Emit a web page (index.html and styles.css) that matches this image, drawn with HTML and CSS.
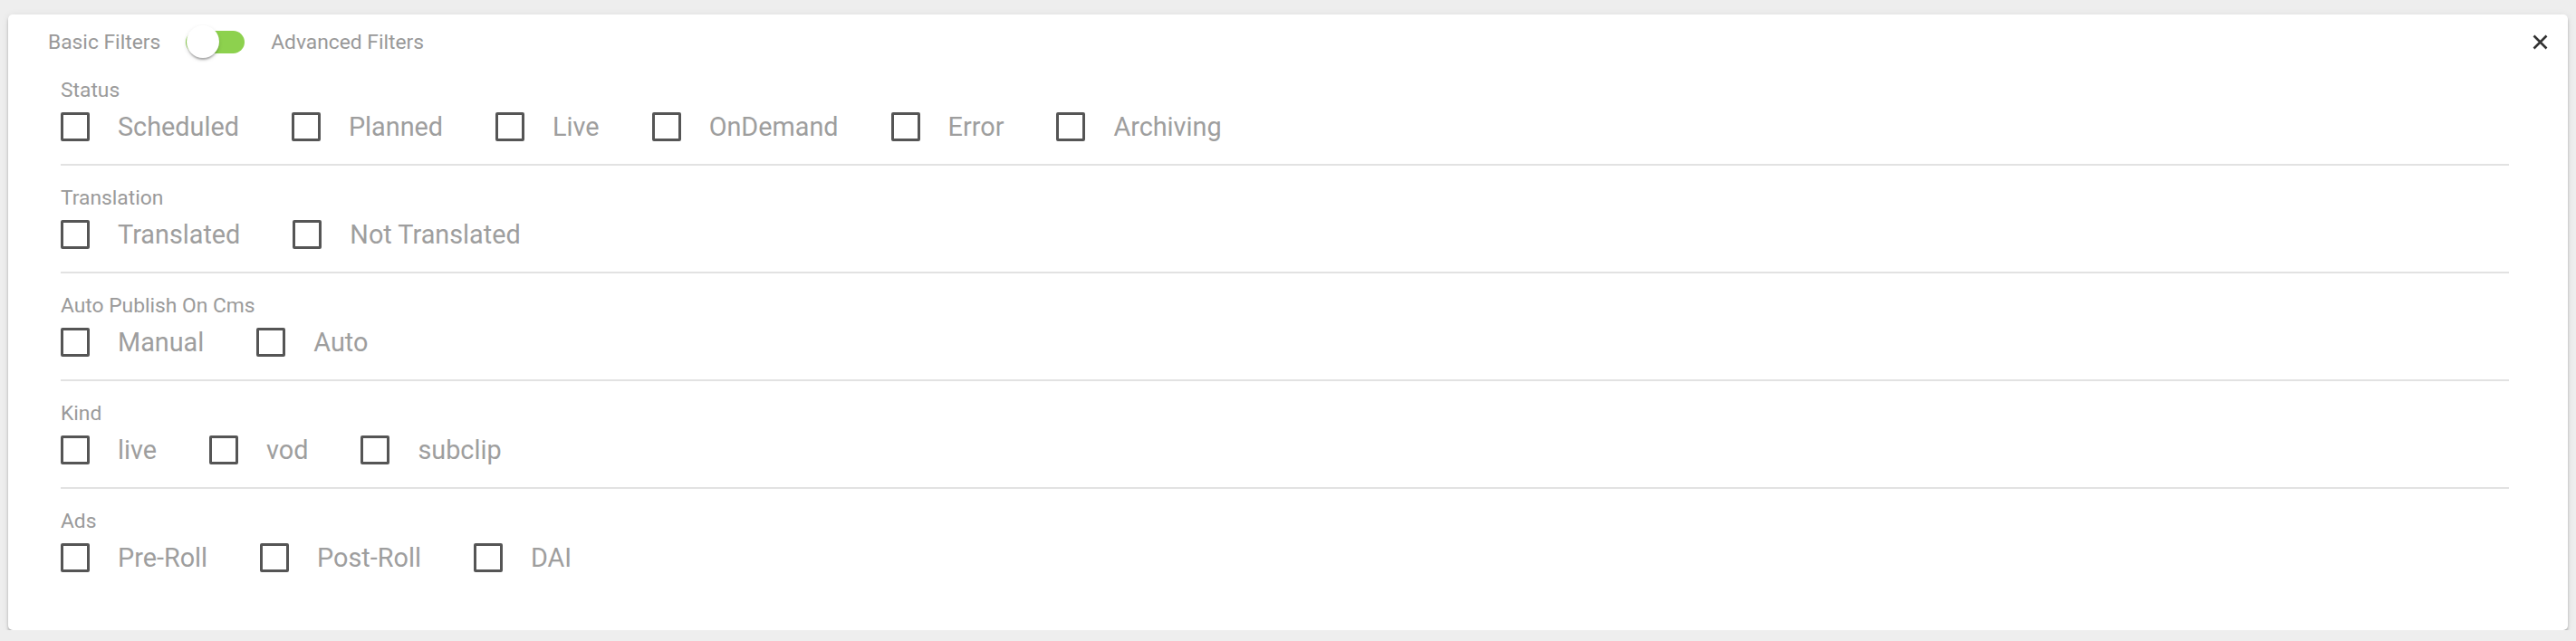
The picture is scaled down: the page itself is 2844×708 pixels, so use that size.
FILE: index.html
```html
<!DOCTYPE html>
<html lang="en">
<head>
    <meta charset="UTF-8">
    <meta name="viewport" content="width=device-width, initial-scale=1.0">
    <title>Filters</title>
    <link rel="stylesheet" href="styles.css">
</head>
<body>
    <div class="filter-card">
        <div class="top-row">
            <div class="mode-switch">
                <span class="mode-label">Basic Filters</span>
                <span class="switch">
                    <span class="switch-track"></span>
                    <span class="switch-thumb"></span>
                </span>
                <span class="mode-label">Advanced Filters</span>
            </div>
            <button class="close-btn" aria-label="Close">
                <svg width="17" height="17" viewBox="0 0 17 17">
                    <path d="M1.5 1.5 L15.5 15.5 M15.5 1.5 L1.5 15.5" stroke="#333" stroke-width="2.6" fill="none"/>
                </svg>
            </button>
        </div>

        <div class="filters">
            <div class="filter-group">
                <div class="group-title">Status</div>
                <div class="options">
                    <label class="option"><span class="box"></span>Scheduled</label>
                    <label class="option"><span class="box"></span>Planned</label>
                    <label class="option"><span class="box"></span>Live</label>
                    <label class="option"><span class="box"></span>OnDemand</label>
                    <label class="option"><span class="box"></span>Error</label>
                    <label class="option"><span class="box"></span>Archiving</label>
                </div>
            </div>

            <div class="filter-group">
                <div class="group-title">Translation</div>
                <div class="options">
                    <label class="option"><span class="box"></span>Translated</label>
                    <label class="option"><span class="box"></span>Not Translated</label>
                </div>
            </div>

            <div class="filter-group">
                <div class="group-title">Auto Publish On Cms</div>
                <div class="options">
                    <label class="option"><span class="box"></span>Manual</label>
                    <label class="option"><span class="box"></span>Auto</label>
                </div>
            </div>

            <div class="filter-group">
                <div class="group-title">Kind</div>
                <div class="options">
                    <label class="option"><span class="box"></span>live</label>
                    <label class="option"><span class="box"></span>vod</label>
                    <label class="option"><span class="box"></span>subclip</label>
                </div>
            </div>

            <div class="filter-group">
                <div class="group-title">Ads</div>
                <div class="options">
                    <label class="option"><span class="box"></span>Pre-Roll</label>
                    <label class="option"><span class="box"></span>Post-Roll</label>
                    <label class="option"><span class="box"></span>DAI</label>
                </div>
            </div>
        </div>
    </div>
</body>
</html>
```

FILE: styles.css
```css
body {
    font-family: Roboto, "Liberation Sans", Arial, sans-serif;
    margin: 0;
    padding: 16px 9px 0 9px;
    background-color: #eeeeee;
    color: #9e9e9e;
}

.filter-card {
    background-color: #fff;
    border-radius: 5px;
    box-shadow: 0 3px 3px rgba(0, 0, 0, 0.25), 0 1px 8px rgba(0, 0, 0, 0.08);
    padding: 12px 22px 58px 44px;
}

.top-row {
    display: flex;
    align-items: center;
    justify-content: space-between;
    height: 36px;
}

.mode-switch {
    display: flex;
    align-items: center;
}

.mode-label {
    font-size: 22.8px;
    color: #999;
}

.switch {
    position: relative;
    display: inline-block;
    width: 65px;
    height: 36px;
    margin: 0 29px 0 28px;
}

.switch-track {
    position: absolute;
    left: 0;
    top: 5.5px;
    width: 65px;
    height: 25px;
    border-radius: 13px;
    background-color: #8dd14e;
}

.switch-thumb {
    position: absolute;
    left: 1px;
    top: 0;
    width: 36px;
    height: 36px;
    border-radius: 50%;
    background-color: #fff;
    box-shadow: 0 3px 2px -1px rgba(0, 0, 0, 0.25), 0 2px 4px rgba(0, 0, 0, 0.15);
}

.close-btn {
    background: none;
    border: none;
    padding: 0;
    width: 17px;
    height: 17px;
    cursor: pointer;
    display: flex;
}

.filters {
    margin: 0 43px 0 14px;
}

.filter-group {
    padding: 23px 0 19px 0;
    border-bottom: 2px solid #e2e2e2;
}

.filter-group:first-child {
    padding-top: 23px;
}

.filter-group:last-child {
    border-bottom: none;
    padding-bottom: 0;
}

.group-title {
    font-size: 22.8px;
    line-height: 26px;
    color: #9a9a9a;
    margin-bottom: 5px;
}

.options {
    display: flex;
    align-items: center;
    height: 44px;
}

.option {
    display: flex;
    align-items: center;
    font-size: 28.8px;
    color: #9e9e9e;
    margin-right: 58px;
    cursor: pointer;
}

.box {
    box-sizing: border-box;
    width: 32px;
    height: 32px;
    border: 3.6px solid #555;
    border-radius: 2px;
    margin-right: 31px;
}
```
